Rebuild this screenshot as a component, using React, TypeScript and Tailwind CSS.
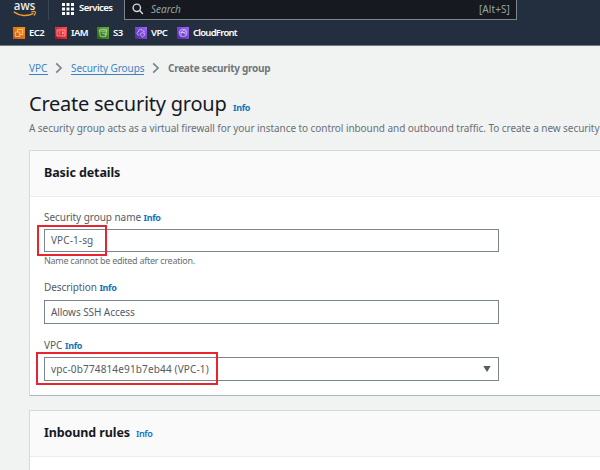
import type { ReactNode } from "react";

function Info({ className = "" }: { className?: string }) {
  return <span className={`font-bold tracking-[-0.35px] text-[#0f73bb] ${className}`}>Info</span>;
}

function ServiceIcon({ from, to, children }: { from: string; to: string; children: ReactNode }) {
  const id = "g" + from.slice(1);
  return (
    <svg viewBox="0 0 12 12" className="h-3 w-3 shrink-0" fill="none" stroke="#fff" strokeWidth="0.7" strokeOpacity="0.75">
      <defs>
        <linearGradient id={id} x1="0" y1="1" x2="1" y2="0">
          <stop offset="0" stopColor={from} />
          <stop offset="1" stopColor={to} />
        </linearGradient>
      </defs>
      <rect width="12" height="12" fill={`url(#${id})`} stroke="none" />
      {children}
    </svg>
  );
}

function Shortcut({ className, icon, label }: { className: string; icon: ReactNode; label: string }) {
  return (
    <div className={`flex shrink-0 items-center gap-[4px] ${className}`}>
      {icon}
      <span>{label}</span>
    </div>
  );
}

function Chevron() {
  return (
    <svg viewBox="0 0 8 12" className="h-3 w-2 shrink-0" fill="none" stroke="#7a8589" strokeWidth="1.7">
      <path d="M1.2 1.4 6 6 1.2 10.6" />
    </svg>
  );
}

function Header() {
  return (
    <header className="h-[46px] border-b border-[#707b81] bg-[#232f3e] text-white">
      <div className="flex h-5">
        <div className="flex w-[49px] shrink-0 border-r border-[#3b4654] pl-[13px]">
          <svg viewBox="0 0 24 18" className="h-[18px] w-6 overflow-visible">
            <text x="0.8" y="10" textLength="21.5" lengthAdjust="spacingAndGlyphs" fontSize="12" fontWeight="600" fill="#e8eaec" fontFamily="Open Sans, sans-serif">aws</text>
            <path d="M.8 11.9C6.5 16.2 14.5 16.6 20.6 13.3" fill="none" stroke="#f29a2e" strokeWidth="1.5" />
            <path d="M18.2 11.9c1.6-.5 3.6-.6 4.1 0 .4.7-.3 2.5-1.4 3.6" fill="none" stroke="#f29a2e" strokeWidth="1.1" />
          </svg>
        </div>
        <div className="flex w-[75px] shrink-0 pl-[13px]">
          <svg viewBox="0 0 12 12" className="mt-[3px] h-3 w-3 shrink-0" fill="#fff">
            {[0, 4.5, 9].map((y) => [0, 4.5, 9].map((x) => <rect key={`${x}-${y}`} x={x} y={y} width="3" height="3" />))}
          </svg>
          <span className="ml-[5px] text-[9.5px] leading-4 font-semibold tracking-[-0.55px]">Services</span>
        </div>
        <div className="flex h-5 w-[393px] shrink-0 border border-t-0 border-[#7c878b] bg-[#161920]">
          <svg viewBox="0 0 12 12" className="mt-[3px] ml-[7px] h-3 w-3 shrink-0" fill="none" stroke="#d5dbdb" strokeWidth="1.4">
            <circle cx="4.8" cy="4.8" r="3.7" />
            <path d="m7.6 7.6 3.3 3.3" />
          </svg>
          <span className="ml-[7px] text-[10px] leading-[18px] text-[#95a5a6] italic">Search</span>
          <span className="mr-[6px] ml-auto text-[10px] leading-[18px] tracking-[0.1px] text-[#95a5a6]">[Alt+S]</span>
        </div>
      </div>
      <nav className="flex h-[26px] items-center pl-[13px] text-[9.5px] leading-3 font-semibold tracking-[-0.6px]">
        <Shortcut className="w-[42px]" label="EC2" icon={
          <ServiceIcon from="#c8511b" to="#ff9900"><path d="M2.3 5h4.5v4.5H2.3zM4.5 5V2.5h5v5H6.8" /></ServiceIcon>
        } />
        <Shortcut className="w-[42px]" label="IAM" icon={
          <ServiceIcon from="#bd0816" to="#ff5252"><path d="M2 3h8v6H2zM3.5 5h2M3.5 7h2M7.8 4.5v3M7 6h1.7" /></ServiceIcon>
        } />
        <Shortcut className="w-[38px]" label="S3" icon={
          <ServiceIcon from="#1b660f" to="#6cae3e"><ellipse cx="6" cy="3.2" rx="3.6" ry="1" /><path d="m2.4 3.2.9 6q2.7 1.3 5.3 0l1-6M5 6l4.8 1.5" /></ServiceIcon>
        } />
        <Shortcut className="w-[42px]" label="VPC" icon={
          <ServiceIcon from="#4d27a8" to="#a166ff"><path d="M4.5 8H3.6C1.5 8 1.5 5 3.4 5 3.4 1.8 7.4 1.7 8 4.1c1 0 1.6.4 1.8 1.2M5.5 6.5l2-.8 2 .8c0 2-.7 2.8-2 3.5-1.4-.7-2-1.6-2-3.5z" /></ServiceIcon>
        } />
        <Shortcut className="tracking-[-0.75px]" label="CloudFront" icon={
          <ServiceIcon from="#4d27a9" to="#a267ff"><circle cx="6" cy="6" r="3.8" /><path d="M2.4 5c2 1 5 1 7-.5M4 9.2c-.5-3 1-5.6 3.8-6.5M4.5 4l4.7 3.8" /></ServiceIcon>
        } />
      </nav>
    </header>
  );
}

export default function App() {
  return (
    <div className="h-[470px] w-[600px] overflow-hidden bg-[#f1f3f3] font-['Noto_Sans','Open_Sans',sans-serif] whitespace-nowrap text-[#545b64]">
      <Header />
      <main className="pl-[29px]">
        <div className="flex h-[44px] items-center text-[10px] leading-3 text-[#3d83c0]">
          <span className="w-[19px] border-b border-[#3d83c0]">VPC</span>
          <span className="mr-[8px] ml-[7px] flex"><Chevron /></span>
          <span className="w-[73px] border-b border-[#3d83c0] tracking-[-0.07px]">Security Groups</span>
          <span className="mr-2 ml-2 flex"><Chevron /></span>
          <span className="font-bold tracking-[-0.27px] text-[#6f777b]">Create security group</span>
        </div>
        <div className="flex h-[30px] items-baseline">
          <h1 className="w-[197px] text-[20px] leading-[28px] tracking-[-0.24px] text-[#16191f]">Create security group</h1>
          <Info className="ml-[7px] text-[9px]" />
        </div>
        <p className="h-[30px] text-[10px] leading-4 tracking-[-0.062px] text-[#687078]">
          A security group acts as a virtual firewall for your instance to control inbound and outbound traffic. To create a new security
        </p>
        <section className="h-[246px] w-[580px] border border-[#d5dbdb] border-b-[#aab7b8] bg-white">
          <div className="h-[46px] border-b border-[#eaeded] bg-[#fafafa] pl-[14px] text-[12.5px] leading-[43px] font-bold tracking-[-0.1px] text-[#16191f]">
            Basic details
          </div>
          <div className="pt-[13px] pl-[14px] text-[10px]">
            <div className="h-[19px] leading-[14px] tracking-[-0.05px]">Security group name <Info className="text-[9px]" /></div>
            <div className="relative h-[23px] w-[455px] border border-[#7d868c] pl-[6px] leading-[21px] tracking-[0.1px]">
              VPC-1-sg
              <div className="absolute top-[-5px] left-[-8px] h-[31px] w-[70px] border-2 border-[#e8252f]" />
            </div>
            <div className="h-[27px] pt-[3px] text-[9px] leading-3 tracking-[-0.27px] text-[#687078]">Name cannot be edited after creation.</div>
            <div className="mt-[1px] h-[20px] leading-[14px] tracking-[-0.08px]">Description <Info className="text-[9px]" /></div>
            <div className="h-[24px] w-[455px] border border-[#7d868c] pl-[6px] leading-[22px] tracking-[-0.07px]">Allows SSH Access</div>
            <div className="mt-[14px] h-[19px] leading-[14px]">VPC <Info className="text-[9px]" /></div>
            <div className="relative flex h-[24px] w-[455px] items-center justify-between border border-[#7d868c] pr-[7px] pl-[6px]">
              <span className="tracking-[0.15px]">vpc-0b774814e91b7eb44 (VPC-1)</span>
              <svg viewBox="0 0 8 6" className="h-[6px] w-2" fill="#545b64"><path d="M.3 0h7.4L4 6z" /></svg>
              <div className="absolute top-[-6px] left-[-9px] h-[33px] w-[182px] border-2 border-[#e8252f]" />
            </div>
          </div>
        </section>
        <section className="mt-[14px] h-[120px] w-[580px] border border-[#d5dbdb] bg-white">
          <div className="flex h-[46px] items-baseline border-b border-[#eaeded] bg-[#fafafa] pl-[14px] text-[12.5px] leading-[43px] font-bold tracking-[-0.1px] text-[#16191f]">
            Inbound rules <Info className="ml-[6px] text-[9px] !font-semibold" />
          </div>
        </section>
      </main>
    </div>
  );
}
